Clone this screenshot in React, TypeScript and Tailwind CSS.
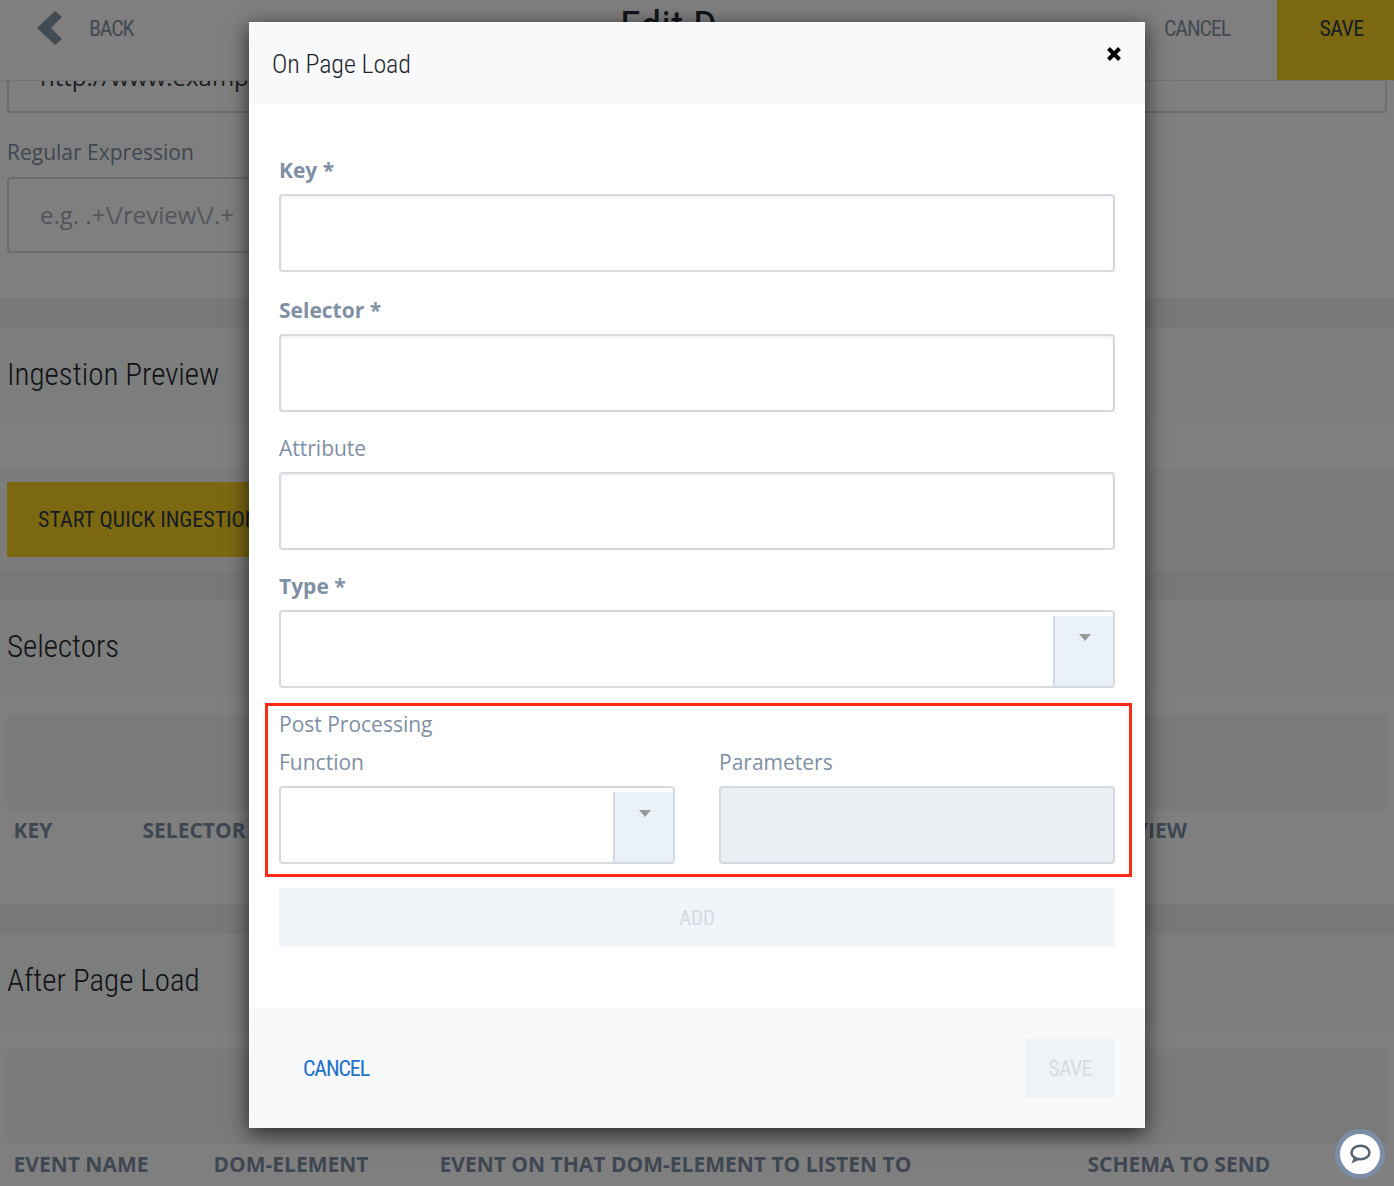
const sans = "font-['Open_Sans',sans-serif]";
const narrow = "font-['Liberation_Sans_Narrow','Roboto_Condensed','Liberation_Sans',sans-serif]";

function Band() {
  return <div className="h-[30px] bg-[#eff1f3]" />;
}

function SectionHead({ title }: { title: string }) {
  return (
    <div className={`${narrow} flex h-[94px] items-center bg-[#f9fafb] pl-[7px] text-[31px] font-light text-[#1f242c]`}>
      {title}
    </div>
  );
}

function TableBlock({ heads }: { heads: { label: string; w: string }[] }) {
  return (
    <div className="flex flex-col px-[7px] pt-[21px]">
      <div className="h-[95px] rounded bg-[#f4f5f7]" />
      <div className={`${sans} flex h-[40px] items-center px-[6.5px] pt-[1px] text-[21px] font-bold whitespace-nowrap text-[#7f8fa4]`}>
        {heads.map((h) => (
          <span key={h.label} className={h.w}>
            {h.label}
          </span>
        ))}
      </div>
    </div>
  );
}

function Field({ label, bold }: { label: string; bold?: boolean }) {
  return (
    <div className="flex flex-col">
      <label className={`${sans} h-[36px] text-[21px] leading-[24px] text-[#7f8fa4] ${bold ? "font-bold" : ""}`}>{label}</label>
      <input className="h-[78px] w-full rounded border-2 border-[#d5dae0] bg-white shadow-[inset_0_2px_3px_rgba(0,0,0,0.05)]" />
    </div>
  );
}

function SelectBox() {
  return (
    <div className="flex h-[78px] w-full overflow-hidden rounded border-2 border-[#d5dae0] bg-white">
      <div className="flex-1" />
      <div className="mt-1 flex w-[60px] justify-center border-l-2 border-[#d5dae0] bg-[#ebf1f9] pt-[18px]">
        <svg className="ml-[2px]" width="12" height="7" viewBox="0 0 12 7">
          <path d="M0 0h12L6 7z" fill="#999" />
        </svg>
      </div>
    </div>
  );
}

export default function App() {
  return (
    <div className="relative h-[1186px] w-[1394px] overflow-hidden bg-white">
      {/* page behind the dialog */}
      <div className={`${narrow} relative z-10 flex h-[80px] items-stretch bg-white text-[22px] shadow-[0_1px_0_#e8eaed]`}>
        <div className="flex w-[620px] items-center pb-[24px]">
          <svg className="ml-[37px]" width="25" height="34" viewBox="0 0 25 34">
            <path d="M18 0l7 6-11 11 11 11-7 6L0 17z" fill="#8494a7" />
          </svg>
          <span className="ml-[27px] tracking-[-1.2px] text-[#8494a7]">BACK</span>
        </div>
        <div className="flex-1 pt-[3px] text-[42px] leading-[48px] text-[#252a33]">Edit D</div>
        <div className="flex items-center pr-[47px] pb-[24px] tracking-[-1.1px] text-[#8494a7]">CANCEL</div>
        <div className="flex w-[117px] items-center justify-center bg-[#f9d122] pb-[24px] pl-[12px] tracking-[-0.6px] text-[#2d3a4a]">SAVE</div>
      </div>

      <div className="px-[7px]">
        <div className={`${sans} h-[33px] overflow-hidden rounded-b border-2 border-t-0 border-[#d5d9e0] pl-[31px] text-[24px] leading-[0px] text-[#3a3f48]`}>
          <div className="-mt-[3px]">http://www.example.com</div>
        </div>
        <div className={`${sans} mt-[24px] h-[40px] text-[21px] leading-[30px] text-[#7f8fa4]`}>Regular Expression</div>
        <div className={`${sans} flex h-[76px] w-[600px] items-center rounded border-2 border-[#d5d9e0] pl-[31px] text-[24px] text-[#a4aab6]`}>
          e.g. .+\/review\/.+
        </div>
      </div>

      <div className="mt-[45px]">
        <Band />
        <SectionHead title="Ingestion Preview" />
        <div className="h-[45px]" />
        <div className="bg-[#f8f9fb] pt-[15px] pb-[13px] pl-[7px]">
          <div className={`${narrow} flex h-[75px] w-[300px] items-center bg-[#f9d122] pl-[31px] text-[22px] whitespace-nowrap text-[#2d3a4a]`}>
            START QUICK INGESTION
          </div>
        </div>
        <Band />
        <SectionHead title="Selectors" />
        <TableBlock
          heads={[
            { label: "KEY", w: "w-[129px]" },
            { label: "SELECTOR", w: "w-[953px]" },
            { label: "PREVIEW", w: "" },
          ]}
        />
        <div className="h-[54px]" />
        <Band />
        <SectionHead title="After Page Load" />
        <TableBlock
          heads={[
            { label: "EVENT NAME", w: "w-[200px]" },
            { label: "DOM-ELEMENT", w: "w-[226px]" },
            { label: "EVENT ON THAT DOM-ELEMENT TO LISTEN TO", w: "w-[648px]" },
            { label: "SCHEMA TO SEND", w: "" },
          ]}
        />
      </div>

      <div className="absolute inset-0 z-20 bg-black/50" />

      {/* dialog */}
      <div className="absolute top-[22px] left-[249px] z-30 flex h-[1106px] w-[896px] flex-col bg-white shadow-[0_5px_20px_rgba(0,0,0,0.7)]">
        <div className="flex h-[82px] items-center justify-between bg-[#f8f9fb] pt-[3px] pr-[23px] pl-[23px]">
          <h2 className={`${narrow} text-[26px] font-light tracking-[-0.1px] text-[#1f242c]`}>On Page Load</h2>
          <svg className="-mt-[21px]" width="16" height="16" viewBox="0 0 16 16">
            <path d="M2.5 2.5l11 11M13.5 2.5l-11 11" stroke="#000" strokeWidth="4" />
          </svg>
        </div>
        <div className="flex flex-1 flex-col px-[30px] pt-[54px]">
          <Field label="Key *" bold />
          <div className="mt-[26px]">
            <Field label="Selector *" bold />
          </div>
          <div className="mt-[24px]">
            <Field label="Attribute" />
          </div>
          <div className="mt-[24px] flex flex-col">
            <label className={`${sans} h-[36px] text-[21px] leading-[24px] font-bold text-[#7f8fa4]`}>Type *</label>
            <SelectBox />
          </div>
          <div className="mt-[15px] -mr-[17px] -ml-[14px] h-[174px] border-[3px] border-[#ff2a1a] pr-[14px] pl-[11px]">
            <div className={`${sans} h-[36px] text-[21px] leading-[36px] text-[#7f8fa4]`}>Post Processing</div>
            <div className="grid grid-cols-2 gap-[44px]">
              <div>
                <div className={`${sans} h-[44px] text-[21px] leading-[41px] text-[#7f8fa4]`}>Function</div>
                <SelectBox />
              </div>
              <div>
                <div className={`${sans} h-[44px] text-[21px] leading-[41px] text-[#7f8fa4]`}>Parameters</div>
                <input disabled className="h-[78px] w-full rounded border-2 border-[#d5dae0] bg-[#ebeef3]" />
              </div>
            </div>
          </div>
          <div className={`${narrow} mt-[11px] flex h-[59px] items-center justify-center bg-[#f1f4f8] pt-[3px] text-[21px] text-[#d5dbe3]`}>ADD</div>
        </div>
        <div className="flex h-[120px] items-center justify-between bg-[#f8f9fb] pr-[30px] pl-[54px]">
          <span className={`${narrow} text-[22px] tracking-[-1.1px] text-[#2171c9]`}>CANCEL</span>
          <div className={`${narrow} flex h-[59px] w-[90px] items-center justify-center bg-[#f0f3f6] text-[22px] tracking-[-0.7px] text-[#d8dbe3]`}>SAVE</div>
        </div>
      </div>

      {/* chat launcher */}
      <div className="absolute top-[1129px] left-[1335px] z-30 flex h-[50px] w-[50px] items-center justify-center rounded-full border-[5px] border-[#7c8ea6] bg-white">
        <svg width="24" height="24" viewBox="0 0 24 24">
          <ellipse cx="12.5" cy="10.5" rx="9" ry="6.8" fill="none" stroke="#5a6470" strokeWidth="2.6" />
          <path d="M6 15l-2.5 6.5 7.5-3.5z" fill="#5a6470" />
        </svg>
      </div>
    </div>
  );
}
